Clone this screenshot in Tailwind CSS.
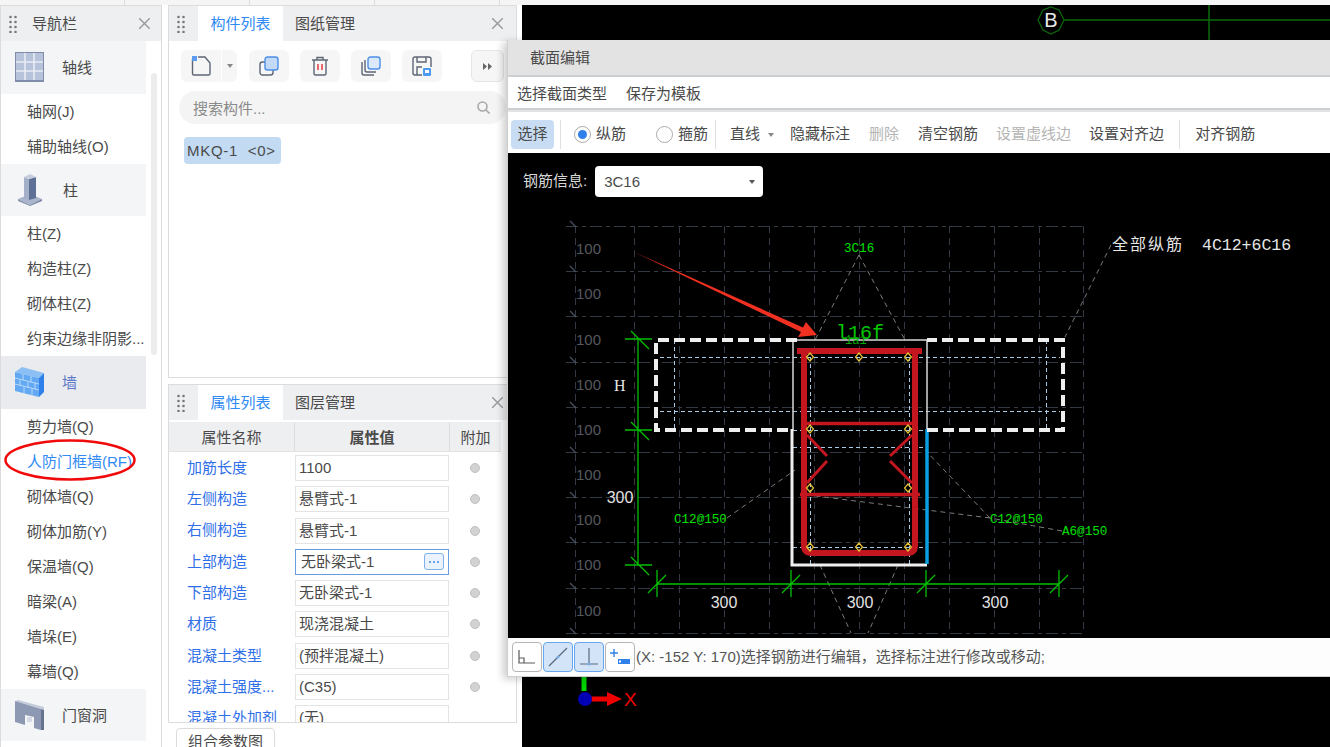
<!DOCTYPE html>
<html lang="zh-CN">
<head>
  <meta charset="UTF-8" />
  <title>截面编辑</title>
  <script src="https://cdn.jsdelivr.net/npm/@tailwindcss/browser@4"></script>
</head>
<body class="bg-white">
<div class="relative w-[1330px] h-[747px] overflow-hidden bg-white text-[15px] text-[#4a4a4a] font-['Liberation_Sans','Noto_Sans_CJK_SC',sans-serif]">

  <!-- top strip -->
  <div class="h-[5px] bg-[#f5f5f5] flex">
    <div class="w-[125px] border-r border-[#ddd]"></div>
    <div class="w-[125px] border-r border-[#ddd]"></div>
    <div class="w-[125px] border-r border-[#ddd]"></div>
    <div class="w-[125px] border-r border-[#ddd]"></div>
  </div>

  <div class="flex h-[742px]">
    <!-- navigation -->
    <aside class="relative w-[162px] shrink-0 border-x border-t border-[#dcdcdc] overflow-hidden">
      <div class="h-[35px] bg-[#eeeff1] flex items-center pl-[8px] pr-[11px]">
        <svg width="8" height="18" viewBox="0 0 8 18" fill="#777"><circle cx="1.5" cy="2" r="1.3"/><circle cx="6.5" cy="2" r="1.3"/><circle cx="1.5" cy="7" r="1.3"/><circle cx="6.5" cy="7" r="1.3"/><circle cx="1.5" cy="12" r="1.3"/><circle cx="6.5" cy="12" r="1.3"/><circle cx="1.5" cy="17" r="1.3"/><circle cx="6.5" cy="17" r="1.3"/></svg>
        <span class="ml-[15px] pt-[2px] flex-1">导航栏</span>
        <svg width="11" height="11" viewBox="0 0 11 11" stroke="#999" stroke-width="1.4"><path d="M0 0L11 11M11 0L0 11"/></svg>
      </div>

      <div class="w-[145px] h-[52.5px] bg-[#f4f5f7] flex items-center pl-[14px] gap-[18px]">
        <svg width="29" height="30" viewBox="0 0 29 30"><rect width="29" height="30" fill="#7f8cab"/><rect x="1" y="1" width="27" height="27" fill="#b7c3da"/><path d="M10 1V28M19 1V28M1 10H28M1 19H28" stroke="#e9edf4" stroke-width="1.6"/></svg>
        <span class="pt-[2px]">轴线</span>
      </div>
      <div class="w-[145px] pl-[26px]">
        <div class="h-[35px] pt-[2px] flex items-center">轴网(J)</div>
        <div class="h-[35px] pt-[2px] flex items-center">辅助轴线(O)</div>
      </div>

      <div class="w-[145px] h-[52.5px] bg-[#f4f5f7] flex items-center pl-[17px] gap-[21px]">
        <svg width="24" height="32" viewBox="0 0 24 32"><path d="M0 25L12 20L24 25L12 31Z" fill="#aab5cb"/><path d="M0 25L12 31V32L0 27Z" fill="#8592ad"/><path d="M24 25L12 31V32L24 27Z" fill="#7583a0"/><path d="M6 3L11 5V26L6 24Z" fill="#a4b0c8"/><path d="M11 5L18 3V24L11 26Z" fill="#5f7097"/><path d="M6 3L12 0L18 3L11 5Z" fill="#c5cedf"/></svg>
        <span class="pt-[2px]">柱</span>
      </div>
      <div class="w-[145px] pl-[26px]">
        <div class="h-[35px] pt-[2px] flex items-center">柱(Z)</div>
        <div class="h-[35px] pt-[2px] flex items-center">构造柱(Z)</div>
        <div class="h-[35px] pt-[2px] flex items-center">砌体柱(Z)</div>
        <div class="h-[35px] pt-[2px] flex items-center whitespace-nowrap">约束边缘非阴影...</div>
      </div>

      <div class="w-[145px] h-[52.5px] bg-[#e9ebef] flex items-center pl-[14px] gap-[18px] text-[#5b79c8]">
        <svg width="29" height="30" viewBox="0 0 29 30"><path d="M0 5L7 0L29 6L24 11Z" fill="#8cc0f5"/><path d="M24 11L29 6V25L24 30Z" fill="#2f80ea"/><path d="M0 5L24 11V30L0 24Z" fill="#62a8f2"/><path d="M0 11L24 17M0 17L24 23M8 7V13M16 9V15M5 13V19M13 15V21M20 16V22M9 20V26M17 22V28" stroke="#b9d9fa" stroke-width="1"/></svg>
        <span class="pt-[2px]">墙</span>
      </div>
      <div class="w-[145px] pl-[26px]">
        <div class="h-[35px] pt-[2px] flex items-center">剪力墙(Q)</div>
        <div class="h-[35px] pt-[2px] flex items-center text-[#2f8af5]">人防门框墙(RF)</div>
        <div class="h-[35px] pt-[2px] flex items-center">砌体墙(Q)</div>
        <div class="h-[35px] pt-[2px] flex items-center">砌体加筋(Y)</div>
        <div class="h-[35px] pt-[2px] flex items-center">保温墙(Q)</div>
        <div class="h-[35px] pt-[2px] flex items-center">暗梁(A)</div>
        <div class="h-[35px] pt-[2px] flex items-center">墙垛(E)</div>
        <div class="h-[35px] pt-[2px] flex items-center">幕墙(Q)</div>
      </div>

      <div class="w-[145px] h-[52.5px] bg-[#f4f5f7] flex items-center pl-[14px] gap-[18px]">
        <svg width="29" height="30" viewBox="0 0 29 30"><path d="M0 1L3 0L29 7V10L26 9Z" fill="#c3cbdb"/><path d="M0 1L26 9V30L19 28V17L10 15V25L0 22Z" fill="#8d99b3"/><path d="M26 9L29 10V30L26 30Z" fill="#66738f"/><rect x="12" y="17" width="5" height="5" fill="#d5dae4"/></svg>
        <span class="pt-[2px]">门窗洞</span>
      </div>

      <!-- scrollbar -->
      <div class="absolute left-[150px] top-[67px] w-[6px] h-[282px] rounded-full bg-[#ececec]"></div>
    </aside>

    <!-- middle column -->
    <div class="ml-[6px] w-[349px] shrink-0 flex flex-col">
      <!-- component list -->
      <section class="h-[373px] shrink-0 border border-[#dcdcdc]">
        <div class="h-[35px] bg-[#eeeff1] flex items-center">
          <svg class="ml-[8px]" width="8" height="18" viewBox="0 0 8 18" fill="#777"><circle cx="1.5" cy="2" r="1.3"/><circle cx="6.5" cy="2" r="1.3"/><circle cx="1.5" cy="7" r="1.3"/><circle cx="6.5" cy="7" r="1.3"/><circle cx="1.5" cy="12" r="1.3"/><circle cx="6.5" cy="12" r="1.3"/><circle cx="1.5" cy="17" r="1.3"/><circle cx="6.5" cy="17" r="1.3"/></svg>
          <div class="ml-[13px] w-[85px] h-full pt-[1px] bg-white flex items-center justify-center text-[#2f8af5]">构件列表</div>
          <div class="ml-[12px] pt-[1px] flex-1">图纸管理</div>
          <svg class="mr-[13px]" width="11" height="11" viewBox="0 0 11 11" stroke="#999" stroke-width="1.4"><path d="M0 0L11 11M11 0L0 11"/></svg>
        </div>
        <div class="flex mt-[9px] ml-[12px] h-[32px]">
          <div class="w-[40px] bg-[#f6f6f6] rounded-l-md flex items-center justify-center">
            <svg width="20" height="20" viewBox="0 0 20 20" fill="none"><path d="M1.5 3V17.5A1.5 1.5 0 0 0 3 19H17.5A1.5 1.5 0 0 0 19 17.5V7L14 1H7" stroke="#5d6675" stroke-width="1.4"/><rect x="1" y="0" width="5" height="5" fill="#5b9bf0"/></svg>
          </div>
          <div class="ml-[1px] w-[15px] bg-[#f6f6f6] rounded-r-md flex items-center justify-center">
            <div class="w-0 h-0 border-x-[3px] border-x-transparent border-t-[4px] border-t-[#888]"></div>
          </div>
          <div class="ml-[12px] w-[40px] bg-[#f6f6f6] rounded-md flex items-center justify-center">
            <svg width="20" height="20" viewBox="0 0 20 20" fill="none"><rect x="1" y="6" width="13" height="13" rx="2.5" stroke="#5d6675" stroke-width="1.4"/><rect x="6" y="1" width="13" height="13" rx="2.5" fill="#c3d9f5" stroke="#4d8fe8" stroke-width="1.4"/></svg>
          </div>
          <div class="ml-[11px] w-[40px] bg-[#f6f6f6] rounded-md flex items-center justify-center">
            <svg width="18" height="20" viewBox="0 0 18 20" fill="none" stroke="#5d6675" stroke-width="1.4"><path d="M1 4H17M6 4V1.5H12V4M3 4V17.5A1.5 1.5 0 0 0 4.5 19H13.5A1.5 1.5 0 0 0 15 17.5V4"/><path d="M7 8V14M11 8V14" stroke="#e4484d" stroke-width="1.6"/></svg>
          </div>
          <div class="ml-[11px] w-[40px] bg-[#f6f6f6] rounded-md flex items-center justify-center">
            <svg width="20" height="20" viewBox="0 0 20 20" fill="none"><path d="M1 6V17A2 2 0 0 0 3 19H13" stroke="#5d6675" stroke-width="1.4"/><path d="M4 4V14A2 2 0 0 0 6 16H15" stroke="#5d6675" stroke-width="1.4"/><rect x="7" y="1" width="12" height="12" rx="2.5" fill="#dce9fa" stroke="#4d8fe8" stroke-width="1.4"/></svg>
          </div>
          <div class="ml-[11px] w-[40px] bg-[#f6f6f6] rounded-md flex items-center justify-center">
            <svg width="20" height="20" viewBox="0 0 20 20" fill="none"><path d="M19 11V3A2 2 0 0 0 17 1H3A2 2 0 0 0 1 3V17A2 2 0 0 0 3 19H10" stroke="#5d6675" stroke-width="1.4"/><path d="M5 1V6H14V1M5 19V11H10" stroke="#5d6675" stroke-width="1.4"/><rect x="11" y="12" width="8" height="8" rx="1" fill="#4d9bf0"/><rect x="13" y="14" width="4" height="3" fill="#fff"/></svg>
          </div>
          <div class="ml-[29px] w-[33px] bg-[#f6f6f6] border border-[#e6e6e6] rounded-md flex items-center justify-center">
            <svg width="9" height="7" viewBox="0 0 9 7" fill="#666"><path d="M0 0L4 3.5L0 7ZM5 0L9 3.5L5 7Z"/></svg>
          </div>
        </div>
        <div class="ml-[10px] mt-[9px] w-[327px] h-[33px] rounded-full bg-[#f4f4f4] flex items-center pl-[14px] pr-[16px] text-[#8a8a8a]">
          <span class="flex-1 pt-[3px]">搜索构件...</span>
          <svg width="13" height="13" viewBox="0 0 13 13" fill="none" stroke="#a8a8a8" stroke-width="1.6"><circle cx="5.5" cy="5.5" r="4.5"/><path d="M9 9L12.5 12.5"/></svg>
        </div>
        <div class="ml-[15px] mt-[13px] w-[97px] h-[27px] rounded-[4px] bg-[#c3daf3] flex items-center pl-[3px] pt-[1px] tracking-[0.7px] whitespace-pre">MKQ-1  &lt;0&gt;</div>
      </section>

      <!-- property list -->
      <section class="mt-[6px] h-[339px] shrink-0 border border-[#dcdcdc] overflow-hidden">
        <div class="h-[35px] bg-[#eeeff1] flex items-center">
          <svg class="ml-[8px]" width="8" height="18" viewBox="0 0 8 18" fill="#777"><circle cx="1.5" cy="2" r="1.3"/><circle cx="6.5" cy="2" r="1.3"/><circle cx="1.5" cy="7" r="1.3"/><circle cx="6.5" cy="7" r="1.3"/><circle cx="1.5" cy="12" r="1.3"/><circle cx="6.5" cy="12" r="1.3"/><circle cx="1.5" cy="17" r="1.3"/><circle cx="6.5" cy="17" r="1.3"/></svg>
          <div class="ml-[13px] w-[85px] h-full pt-[2px] bg-white flex items-center justify-center text-[#2f8af5]">属性列表</div>
          <div class="ml-[12px] pt-[2px] flex-1">图层管理</div>
          <svg class="mr-[13px]" width="11" height="11" viewBox="0 0 11 11" stroke="#999" stroke-width="1.4"><path d="M0 0L11 11M11 0L0 11"/></svg>
        </div>
        <div class="mt-[2px] h-[30px] w-[332px] bg-[#eeeff1] border-b border-[#e2e2e2] flex text-center">
          <div class="w-[126px] leading-[32px] border-r border-[#ddd]">属性名称</div>
          <div class="w-[155px] leading-[32px] border-r border-[#ddd] font-bold">属性值</div>
          <div class="flex-1 leading-[32px]">附加</div>
        </div>

        <div class="mt-[3px] flex flex-col gap-[5.3px]">
          <div class="flex items-center h-[26px]"><div class="w-[126px] pl-[18px] text-[#2f6fe8]">加筋长度</div><div class="w-[154px] h-[26px] border border-[#e4e4e4] pl-[3px] leading-[24px]">1100</div><div class="ml-[21px] w-[10px] h-[10px] rounded-full bg-[#d2d2d2] border border-[#c0c0c0]"></div></div>
          <div class="flex items-center h-[26px]"><div class="w-[126px] pl-[18px] text-[#2f6fe8]">左侧构造</div><div class="w-[154px] h-[26px] border border-[#e4e4e4] pl-[3px] leading-[24px]">悬臂式-1</div><div class="ml-[21px] w-[10px] h-[10px] rounded-full bg-[#d2d2d2] border border-[#c0c0c0]"></div></div>
          <div class="flex items-center h-[26px]"><div class="w-[126px] pl-[18px] text-[#2f6fe8]">右侧构造</div><div class="w-[154px] h-[26px] border border-[#e4e4e4] pl-[3px] leading-[24px]">悬臂式-1</div><div class="ml-[21px] w-[10px] h-[10px] rounded-full bg-[#d2d2d2] border border-[#c0c0c0]"></div></div>
          <div class="flex items-center h-[26px]">
            <div class="w-[126px] pl-[18px] text-[#2f6fe8]">上部构造</div>
            <div class="w-[154px] h-[26px] border border-[#6b9be0] pl-[5px] pr-[4px] flex items-center justify-between">
              <span>无卧梁式-1</span>
              <div class="w-[20px] h-[17px] rounded-[3px] border border-[#7fb0ea] bg-[#eaf3fd] flex items-center justify-center gap-[2px]">
                <span class="w-[2px] h-[2px] rounded-full bg-[#3f86e0]"></span><span class="w-[2px] h-[2px] rounded-full bg-[#3f86e0]"></span><span class="w-[2px] h-[2px] rounded-full bg-[#3f86e0]"></span>
              </div>
            </div>
            <div class="ml-[21px] w-[10px] h-[10px] rounded-full bg-[#d2d2d2] border border-[#c0c0c0]"></div>
          </div>
          <div class="flex items-center h-[26px]"><div class="w-[126px] pl-[18px] text-[#2f6fe8]">下部构造</div><div class="w-[154px] h-[26px] border border-[#e4e4e4] pl-[3px] leading-[24px]">无卧梁式-1</div><div class="ml-[21px] w-[10px] h-[10px] rounded-full bg-[#d2d2d2] border border-[#c0c0c0]"></div></div>
          <div class="flex items-center h-[26px]"><div class="w-[126px] pl-[18px] text-[#2f6fe8]">材质</div><div class="w-[154px] h-[26px] border border-[#e4e4e4] pl-[3px] leading-[24px]">现浇混凝土</div><div class="ml-[21px] w-[10px] h-[10px] rounded-full bg-[#d2d2d2] border border-[#c0c0c0]"></div></div>
          <div class="flex items-center h-[26px]"><div class="w-[126px] pl-[18px] text-[#2f6fe8]">混凝土类型</div><div class="w-[154px] h-[26px] border border-[#e4e4e4] pl-[3px] leading-[24px]">(预拌混凝土)</div><div class="ml-[21px] w-[10px] h-[10px] rounded-full bg-[#d2d2d2] border border-[#c0c0c0]"></div></div>
          <div class="flex items-center h-[26px]"><div class="w-[126px] pl-[18px] text-[#2f6fe8] whitespace-nowrap">混凝土强度...</div><div class="w-[154px] h-[26px] border border-[#e4e4e4] pl-[3px] leading-[24px]">(C35)</div><div class="ml-[21px] w-[10px] h-[10px] rounded-full bg-[#d2d2d2] border border-[#c0c0c0]"></div></div>
          <div class="flex items-center h-[26px]"><div class="w-[126px] pl-[18px] text-[#2f6fe8] whitespace-nowrap">混凝土外加剂</div><div class="w-[154px] h-[26px] border border-[#e4e4e4] pl-[3px] leading-[24px]">(无)</div></div>
        </div>
      </section>

      <div class="ml-[8px] mt-[5px] w-[99px] h-[30px] shrink-0 rounded-t-[4px] border border-[#dcdcdc] text-center leading-[26px]">组合参数图</div>
    </div>

    <!-- drawing area behind the dialog -->
    <main class="ml-[5px] flex-1 bg-black">
      <svg class="block" width="808" height="742" viewBox="522 5 808 742" fill="none">
        <path d="M1064 20H1330M1209 5V40" stroke="#0b6a0b" stroke-width="1.5"/>
        <path d="M1051 7L1059 10L1064 20L1059 30L1051 34L1043 30L1038 20L1043 10Z" stroke="#0b6a0b" stroke-width="1.2"/>
        <text x="1051" y="27" text-anchor="middle" font-size="20" fill="#e8e8e8">B</text>
        <path d="M584 677V691" stroke="#00d400" stroke-width="5"/>
        <path d="M590 699H609" stroke="#f00000" stroke-width="5"/>
        <path d="M607 692L622 699L607 706Z" fill="#f00000"/>
        <circle cx="585" cy="699" r="7" fill="#0000b4"/>
        <text x="624" y="706" font-size="19" fill="#f00000">X</text>
      </svg>
    </main>
  </div>

  <!-- section editor dialog -->
  <div class="absolute left-[507px] top-[40px] w-[823px] h-[637px] flex flex-col bg-[#e3e3e3] border-l border-b-2 border-[#cfcfcf] shadow-[-4px_2px_8px_rgba(0,0,0,0.2)]">
    <div class="h-[35px] shrink-0 pl-[22px] pt-[2px] flex items-center">截面编辑</div>
    <div class="h-[35px] shrink-0 border-y-2 border-[#cdd0d3] bg-white flex items-center pl-[9px] pt-[3px] gap-[19px]">
      <span>选择截面类型</span><span>保存为模板</span>
    </div>
    <div class="h-[41px] shrink-0 mt-[2px] bg-white flex items-center pl-[3px] pt-[4px] whitespace-nowrap">
      <div class="w-[43px] h-[29px] rounded-[4px] bg-[#c8ddf3] flex items-center justify-center">选择</div>
      <div class="ml-[6px] w-px h-[29px] bg-[#e0e0e0]"></div>
      <div class="ml-[13px] w-[17px] h-[17px] rounded-full border border-[#aaa] flex items-center justify-center"><div class="w-[9px] h-[9px] rounded-full bg-[#2f80ea]"></div></div>
      <span class="ml-[5px]">纵筋</span>
      <div class="ml-[30px] w-[17px] h-[17px] rounded-full border border-[#aaa]"></div>
      <span class="ml-[5px]">箍筋</span>
      <div class="ml-[7px] w-px h-[29px] bg-[#e0e0e0]"></div>
      <span class="ml-[14px]">直线</span>
      <div class="ml-[8px] w-0 h-0 border-x-[3px] border-x-transparent border-t-[4px] border-t-[#888]"></div>
      <span class="ml-[16px]">隐藏标注</span>
      <span class="ml-[19px] text-[#b5b5b5]">删除</span>
      <span class="ml-[19px]">清空钢筋</span>
      <span class="ml-[18px] text-[#b5b5b5]">设置虚线边</span>
      <span class="ml-[18px]">设置对齐边</span>
      <div class="ml-[15px] w-px h-[29px] bg-[#e0e0e0]"></div>
      <span class="ml-[15px]">对齐钢筋</span>
    </div>

    <div class="relative h-[485px] shrink-0 bg-black">
      <svg class="block" width="822" height="485" viewBox="508 153 822 485" fill="none">
        <!-- grid -->
        <g shape-rendering="crispEdges">
          <path d="M575 226V633M634 226V633M679 226V633M724 226V633M769 226V633M814 226V633M859 226V633M904 226V633M949 226V633M994 226V633M1039 226V633M1083 226V633" stroke="#333a46" stroke-width="1" stroke-dasharray="7 5"/>
          <path d="M566 226H1083M566 271H1083M566 316H1083M566 362H1083M566 407H1083M566 452H1083M566 497H1083M566 542H1083M566 588H1083M566 633H1083" stroke="#333a46" stroke-width="1" stroke-dasharray="12 4 4 4"/>
        </g>
        <path d="M570 221L576 227M570 266L576 272M570 311L576 317M570 357L576 363M570 402L576 408M570 447L576 453M570 492L576 498M570 537L576 543M570 583L576 589M570 628L576 634" stroke="#4a5260" stroke-width="1.2"/>
        <g font-size="15" fill="#55585e">
          <text x="576" y="254">100</text><text x="576" y="299">100</text><text x="576" y="345">100</text><text x="576" y="390">100</text><text x="576" y="435">100</text><text x="576" y="480">100</text><text x="576" y="525">100</text><text x="576" y="570">100</text><text x="576" y="616">100</text>
        </g>

        <!-- leader lines -->
        <g stroke="#7c7c7c" stroke-width="1" stroke-dasharray="5 4">
          <path d="M1111 245L1065 337M859 255L815 340M859 255L905 340M727 518L795 470M990 518L925 450M990 518L800 494M1062 531L990 518M820 565L851 633M898 565L868 633"/>
        </g>

        <!-- inner rebar guides -->
        <g stroke="#a8cce8" stroke-width="1" stroke-dasharray="4 3" shape-rendering="crispEdges">
          <path d="M660 357H1060M660 411H1060M674 340V430M1046 340V430M810 357V565M909 357V565M793 447H925M793 547H925M793 430H925"/>
        </g>

        <!-- section outline -->
        <path d="M793 340V430M793 340H927V430" stroke="#d8d8d8" stroke-width="1.5"/>
        <path d="M792 429V565H927" stroke="#efefef" stroke-width="3"/>
        <path d="M927 429V564" stroke="#0a9fe0" stroke-width="3.5"/>
        <path d="M797 340H656V430H792M927 430H1063V340H927" stroke="#efefef" stroke-width="4" stroke-dasharray="11 5"/>

        <!-- stirrups -->
        <g stroke="#c4161f">
          <path d="M797 351H922" stroke-width="6"/>
          <path d="M804 350V545Q804 553 812 553H907Q915 553 915 545V350" stroke-width="6"/>
          <path d="M807 423.5H912M800 494.5H920" stroke-width="3.5"/>
          <path d="M807 435L827 456M827 461L807 483M912 435L890 456M890 461L912 483" stroke-width="3"/>
        </g>

        <!-- rebar points -->
        <g stroke="#e8c43a" stroke-width="1.2">
          <path d="M810 353L813.5 357L810 361L806.5 357ZM859 353L862.5 357L859 361L855.5 357ZM908 353L911.5 357L908 361L904.5 357ZM810 425L813.5 429L810 433L806.5 429ZM908 425L911.5 429L908 433L904.5 429ZM810 484L813.5 488L810 492L806.5 488ZM908 484L911.5 488L908 492L904.5 488ZM810 543L813.5 547L810 551L806.5 547ZM859 543L862.5 547L859 551L855.5 547ZM908 543L911.5 547L908 551L904.5 547Z"/>
        </g>

        <!-- dimensions -->
        <g stroke="#00c000" stroke-width="1.3">
          <path d="M638 339V565M625 339H652M625 430H652M625 565H652M631 331L649 349M631 422L649 440M631 557L649 575"/>
          <path d="M657 584H1059M657 570V597M791 570V597M926 570V597M1059 570V597M648 593L666 575M782 593L800 575M917 593L935 575M1050 593L1068 575"/>
        </g>

        <g font-family="Liberation Sans" font-size="16" fill="#e0e0e0" text-anchor="middle">
          <text x="620" y="503">300</text><text x="724" y="608">300</text><text x="860" y="608">300</text><text x="995" y="608">300</text>
        </g>
        <text x="614" y="391" font-family="Liberation Serif" font-size="16" fill="#e6e6e6">H</text>

        <g font-family="Liberation Mono" font-size="12.6" fill="#00e000">
          <text x="844" y="252">3C16</text>
          <text x="674" y="523">C12@150</text>
          <text x="990" y="523">C12@150</text>
          <text x="1062" y="535">A6@150</text>
        </g>
        <text x="836" y="339" font-family="Liberation Mono" font-size="20" fill="#00c800">l16f</text>
        <text x="845" y="344" font-family="Liberation Mono" font-size="12" fill="#00a800">1a1</text>

        <text x="1112" y="250" font-size="16" letter-spacing="2" fill="#e6e6e6">全部纵筋</text>
        <text x="1202" y="250" font-family="Liberation Mono" font-size="16.5" fill="#e6e6e6">4C12+6C16</text>

        <!-- red annotation arrow -->
        <path d="M634 252L803 327.5L806 322L817 335L798 337L801 332Z" fill="#f03020"/>
      </svg>

      <!-- rebar info select -->
      <div class="absolute left-[15px] top-[13px] flex items-center text-[#d8d8d8]">
        <span>钢筋信息:</span>
        <div class="ml-[8px] w-[168px] h-[31px] rounded-[4px] bg-white text-[#4a4a4a] flex items-center justify-between pl-[9px] pr-[8px]">
          <span class="pt-[1px]">3C16</span>
          <div class="w-0 h-0 border-x-[3px] border-x-transparent border-t-[4px] border-t-[#555]"></div>
        </div>
      </div>
    </div>

    <!-- status bar -->
    <div class="h-[38px] shrink-0 bg-[#fdfdfd] flex items-center pl-[4px] text-[#555] whitespace-nowrap">
      <div class="w-[30px] h-[30px] rounded-[4px] border border-[#b5b5b5] bg-white flex items-center justify-center">
        <svg width="18" height="16" viewBox="0 0 18 16" fill="none" stroke="#5a5a5a" stroke-width="1.2"><path d="M1 1V14H17M1 9H6V14"/></svg>
      </div>
      <div class="ml-[1px] w-[30px] h-[30px] rounded-[4px] border border-[#66a6f0] bg-[#d3e4f8] flex items-center justify-center">
        <svg width="20" height="20" viewBox="0 0 20 20" fill="none" stroke="#5a6a80" stroke-width="1.2"><path d="M1 19L19 1"/><circle cx="10" cy="10" r="1.6" fill="#7db0ea" stroke="none"/></svg>
      </div>
      <div class="ml-[1px] w-[30px] h-[30px] rounded-[4px] border border-[#66a6f0] bg-[#d3e4f8] flex items-center justify-center">
        <svg width="20" height="20" viewBox="0 0 20 20" fill="none" stroke="#5a6a80" stroke-width="1.2"><path d="M10 1V17M1 17H19"/><circle cx="10" cy="17" r="1.6" fill="#7db0ea" stroke="none"/></svg>
      </div>
      <div class="ml-[1px] w-[30px] h-[30px] rounded-[4px] border border-[#b5b5b5] bg-white flex items-center justify-center">
        <svg width="22" height="18" viewBox="0 0 22 18" fill="none"><path d="M5 1V9M1 5H9" stroke="#2f80ea" stroke-width="1.4"/><rect x="9" y="11" width="12" height="5" fill="#2f80ea"/><rect x="10" y="12.5" width="2" height="2" fill="#fff"/></svg>
      </div>
      <span class="ml-[1px]">(X: -152 Y: 170)选择钢筋进行编辑，选择标注进行修改或移动;</span>
    </div>
  </div>

  <!-- red hand-drawn ellipse around the highlighted item -->
  <svg class="absolute left-[3px] top-[438px]" width="134" height="44" viewBox="0 0 134 44" fill="none"><ellipse cx="67" cy="22" rx="64.5" ry="19.5" stroke="#f00a0a" stroke-width="2.5"/></svg>
</div>
</body>
</html>
